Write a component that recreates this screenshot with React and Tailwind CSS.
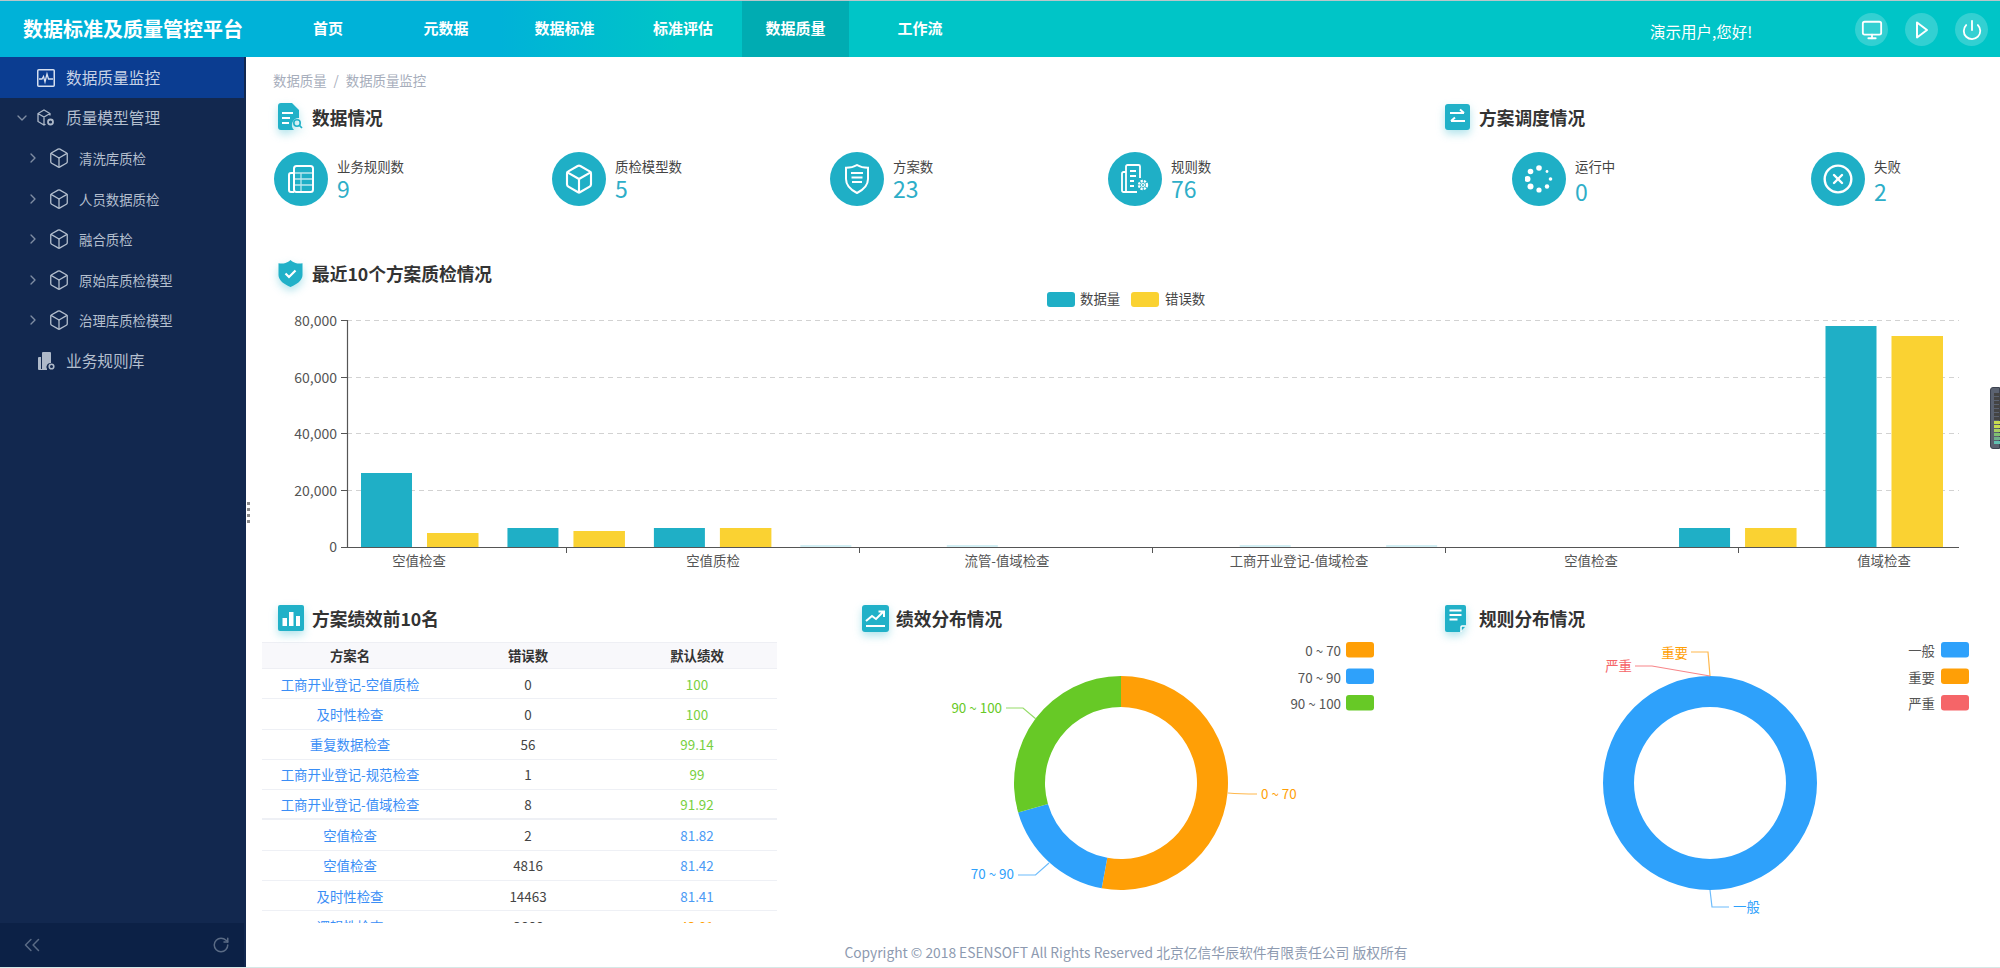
import { Box, ChevronDown, ChevronRight, ChevronsLeft, CircleX, Monitor, Power, RotateCw } from "lucide-react";

const NAV = [
  { label: "首页", w: "w-[118px]" },
  { label: "元数据", w: "w-[118px]" },
  { label: "数据标准", w: "w-[119px]" },
  { label: "标准评估", w: "w-[118px]" },
  { label: "数据质量", w: "w-[107px]", active: true },
  { label: "工作流", w: "w-[142px]" },
];

const SUB_MENU = ["清洗库质检", "人员数据质检", "融合质检", "原始库质检模型", "治理库质检模型"];

const GREEN = "text-[#79d03f]";
const BLUE = "text-[#4a9af5]";
const ORANGE = "text-[#ff9f06]";

const ROWS = [
  ["工商开业登记-空值质检", "0", "100", GREEN],
  ["及时性检查", "0", "100", GREEN],
  ["重复数据检查", "56", "99.14", GREEN],
  ["工商开业登记-规范检查", "1", "99", GREEN],
  ["工商开业登记-值域检查", "8", "91.92", GREEN],
  ["空值检查", "2", "81.82", BLUE],
  ["空值检查", "4816", "81.42", BLUE],
  ["及时性检查", "14463", "81.41", BLUE],
  ["逻辑性检查", "3666", "43.81", ORANGE],
];

// teal / yellow bar tops per category, in page pixels
const BARS = [
  [473, 533],
  [528, 531],
  [528, 528],
  [545, 547],
  [545, 547],
  [547, 547],
  [545, 547],
  [545, 547],
  [547, 547],
  [528, 528],
  [326, 336],
];

const X_LABELS = [
  ["空值检查", 419],
  ["空值质检", 713],
  ["流管-值域检查", 1007],
  ["工商开业登记-值域检查", 1299],
  ["空值检查", 1591],
  ["值域检查", 1884],
];

const polar = (cx, cy, r, deg) => {
  const a = ((deg - 90) * Math.PI) / 180;
  return [cx + r * Math.cos(a), cy + r * Math.sin(a)];
};

const arc = (cx, cy, R, r, from, to) => {
  const large = to - from > 180 ? 1 : 0;
  const [x0, y0] = polar(cx, cy, R, from);
  const [x1, y1] = polar(cx, cy, R, to);
  const [x2, y2] = polar(cx, cy, r, to);
  const [x3, y3] = polar(cx, cy, r, from);
  return `M${x0} ${y0}A${R} ${R} 0 ${large} 1 ${x1} ${y1}L${x2} ${y2}A${r} ${r} 0 ${large} 0 ${x3} ${y3}Z`;
};

function SectionTitle({ icon, children, className = "" }) {
  return (
    <div className={`flex h-[30px] items-center ${className}`}>
      <div className="flex w-[34px] shrink-0 items-center">{icon}</div>
      <span className="text-[17.7px] font-bold text-[#333]">{children}</span>
    </div>
  );
}

function Stat({ icon, label, value, low, className = "" }) {
  return (
    <div className={`flex gap-[9px] ${className}`}>
      <div className="flex h-[54px] w-[54px] items-center justify-center rounded-full bg-[#1fafc6] text-white">{icon}</div>
      <div className="pt-[5px]">
        <div className="text-[13.4px] leading-[18px] text-[#444]">{label}</div>
        <div className={`text-[23px] leading-[26px] text-[#2eaec8] ${low ? "mt-[3px]" : ""}`}>{value}</div>
      </div>
    </div>
  );
}

const TitleIconShadow = "drop-shadow-[0_4px_4px_rgba(33,177,200,0.35)]";

function DocSearchIcon() {
  return (
    <svg width="25" height="28" viewBox="0 0 25 28" className={TitleIconShadow}>
      <path d="M3 0h11l7 7v8a7 7 0 0 0-5 12H3a3 3 0 0 1-3-3V3a3 3 0 0 1 3-3Z" fill="#21b1c8" />
      <path d="M4 10h11M4 15h8M4 20h7" stroke="#fff" strokeWidth="2" />
      <circle cx="19" cy="20" r="3.2" fill="none" stroke="#21b1c8" strokeWidth="1.6" />
      <path d="M21.4 22.4 24 25" stroke="#21b1c8" strokeWidth="1.6" />
    </svg>
  );
}

function SwapIcon() {
  return (
    <svg width="25" height="26" viewBox="0 0 25 26" className={TitleIconShadow}>
      <rect width="25" height="26" rx="3" fill="#21b1c8" />
      <path d="M5 9h14M15 5.500 19 9M20 17H6M10 13.500 6 17" fill="none" stroke="#fff" strokeWidth="2" />
    </svg>
  );
}

function ShieldCheckIcon() {
  return (
    <svg width="25" height="27" viewBox="0 0 25 27" className={TitleIconShadow}>
      <path d="M12.500 0c2 2 3.500 2.500 5 3 2.500.8 5 .5 7 .3V15c0 5.500-6 9.500-12 12C6.500 24.500.5 20.500.5 15V3.300c2 .2 4.500.5 7-.3 1.500-.5 3-1 5-3Z" fill="#21b1c8" />
      <path d="m7.500 13.500 3.500 3.500 6.500-6.500" fill="none" stroke="#fff" strokeWidth="2.200" />
    </svg>
  );
}

function BarsIcon() {
  return (
    <svg width="26" height="26" viewBox="0 0 26 26" className={TitleIconShadow}>
      <rect width="26" height="26" rx="2" fill="#21b1c8" />
      <path d="M4.500 13h4.500v8H4.500zM11 7h4.500v14H11zM18 11h4v10h-4z" fill="#fff" />
    </svg>
  );
}

function TrendIcon() {
  return (
    <svg width="27" height="27" viewBox="0 0 27 27" className={TitleIconShadow}>
      <rect width="27" height="27" rx="3" fill="#21b1c8" />
      <path d="m4 16 6-5 4 3 7-7M16.500 6.500H22V12" fill="none" stroke="#fff" strokeWidth="2" />
      <path d="M4 21h19" stroke="#fff" strokeWidth="2" />
    </svg>
  );
}

function NoteIcon() {
  return (
    <svg width="21" height="27" viewBox="0 0 21 27" className={TitleIconShadow}>
      <path d="M2 0h17a2 2 0 0 1 2 2v19l-6 6H2a2 2 0 0 1-2-2V2a2 2 0 0 1 2-2Z" fill="#21b1c8" />
      <path d="M4.500 5.500h12M4.500 10h12M4.500 14.500h8" stroke="#fff" strokeWidth="1.800" />
      <path d="M16 27v-5a1 1 0 0 1 1-1h4" fill="none" stroke="#fff" strokeWidth="1.500" />
    </svg>
  );
}

function BookStatIcon() {
  return (
    <svg width="26" height="28" viewBox="0 0 26 28" fill="none" stroke="#fff" strokeWidth="2">
      <path d="M6 8H3a2 2 0 0 0-2 2v15a2 2 0 0 0 2 2h3" />
      <rect x="6" y="1" width="19" height="26" rx="2.500" />
      <path d="M7 8h17M7 14h17M7 20h17M13 8v19" strokeWidth="1.300" opacity="0.7" />
    </svg>
  );
}

function ShieldStatIcon() {
  return (
    <svg width="24" height="30" viewBox="0 0 24 30" fill="none" stroke="#fff" strokeWidth="2">
      <path d="M12 1c3 1.800 7 2.700 11 2.700V15c0 6-5 11-11 14C6 26 1 21 1 15V3.700C5 3.700 9 2.800 12 1Z" />
      <path d="M6 9h12M6.500 13.500h11M7 18h10" />
    </svg>
  );
}

function RulesStatIcon() {
  return (
    <svg width="28" height="30" viewBox="0 0 28 30" fill="none" stroke="#fff" strokeWidth="1.800">
      <path d="M5 8H2.500A1.500 1.500 0 0 0 1 9.500v17A1.500 1.500 0 0 0 2.500 28H16" />
      <path d="M5 28V2.500A1.500 1.500 0 0 1 6.500 1h11A1.500 1.500 0 0 1 19 2.500V14" />
      <path d="M9 7h6M9 12h6M9 17h4M9 22h4" />
      <circle cx="22" cy="21" r="4" strokeWidth="2.400" strokeDasharray="2.200 1" />
      <circle cx="22" cy="21" r="1.500" strokeWidth="1.200" />
    </svg>
  );
}

function SpinnerStatIcon() {
  return (
    <svg width="28" height="28" viewBox="0 0 28 28" fill="#fff">
      <circle cx="14" cy="3" r="2.800" />
      <circle cx="5.500" cy="6.500" r="2.800" />
      <circle cx="2.500" cy="14" r="3" />
      <circle cx="5.500" cy="21.500" r="3" />
      <circle cx="14" cy="25" r="2.600" />
      <circle cx="22" cy="21.500" r="2.200" />
      <circle cx="25.500" cy="14" r="1.800" />
      <circle cx="22" cy="6.500" r="1.400" />
    </svg>
  );
}

function ActivityIcon() {
  return (
    <svg width="18" height="18" viewBox="0 0 18 18" fill="none" stroke="#d5dff0">
      <rect x="0.750" y="0.750" width="16.500" height="16.500" rx="1" strokeWidth="1.500" />
      <path d="M2 10h3l1.500-2.500L8 13l2-8 1.500 5H16" strokeWidth="1.300" />
    </svg>
  );
}

function ModelIcon() {
  return (
    <svg width="18" height="18" viewBox="0 0 18 18" fill="none" stroke="#aeb9c9" strokeWidth="1.300">
      <path d="M13 6.500V4.500L7 1 1 4.500v8L7 16l1.500-.8M1 4.500 7 8l6-3.500M7 8v8" />
      <circle cx="13.500" cy="13" r="2.500" strokeWidth="1.800" />
    </svg>
  );
}

function RuleLibIcon() {
  return (
    <svg width="18" height="18" viewBox="0 0 18 18" fill="#aeb9c9">
      <path d="M2 5h2v12h6v1H2a1 1 0 0 1-1-1V6a1 1 0 0 1 1-1Z" />
      <path d="M5 1a1 1 0 0 1 1-1h7a1 1 0 0 1 1 1v10a4 4 0 0 0-4 6H5Z" />
      <circle cx="14.500" cy="14.500" r="2.300" fill="none" stroke="#aeb9c9" strokeWidth="1.600" />
    </svg>
  );
}

function NarrowPlayIcon() {
  return (
    <svg width="14" height="18" viewBox="0 0 14 18" fill="none" stroke="#fff" strokeWidth="2" strokeLinejoin="round">
      <path d="M2 1.500 12 9 2 16.500Z" />
    </svg>
  );
}

function PageTop() {
  return (
    <header className="flex h-[57px] shrink-0 items-stretch border-t border-[#b9c6ca] bg-[linear-gradient(90deg,#00b2d8_25%,#00c5c7_34%)] text-white">
      <div className="flex w-[269px] items-center pl-[23px] text-[20px] font-bold">数据标准及质量管控平台</div>
      {NAV.map((item) => (
        <div
          key={item.label}
          className={`flex items-center justify-center pb-[2px] text-[15px] font-bold ${item.w} ${item.active ? "bg-[#00acb2]" : ""}`}
        >
          {item.label}
        </div>
      ))}
      <div className="flex-1 pl-[659px] pt-[20px] text-[15.500px] leading-[20px]">演示用户,您好!</div>
      <div className="flex items-start gap-[17px] pr-[12px] pt-[12px]">
        <div className="flex h-[33px] w-[33px] items-center justify-center rounded-full bg-white/20">
          <Monitor size={22} strokeWidth={2} />
        </div>
        <div className="flex h-[33px] w-[33px] items-center justify-center rounded-full bg-white/20">
          <NarrowPlayIcon />
        </div>
        <div className="flex h-[33px] w-[33px] items-center justify-center rounded-full bg-white/20">
          <Power size={22} strokeWidth={2} />
        </div>
      </div>
    </header>
  );
}

function Sidebar() {
  return (
    <aside className="flex w-[246px] shrink-0 flex-col border-r-2 border-[#12284f] bg-[#12284f] text-[#b4bfce]">
      <div className="flex h-[41px] items-center gap-[11px] bg-[#0b3d91] pl-[37px] text-[15.700px] text-[#c7d2e6]">
        <ActivityIcon />
        数据质量监控
      </div>
      <div className="flex h-[40px] items-center text-[15.700px]">
        <ChevronDown size={16} className="ml-[14px] mr-[7px] text-[#7f8da3]" />
        <ModelIcon />
        <span className="ml-[11px]">质量模型管理</span>
      </div>
      {SUB_MENU.map((name) => (
        <div key={name} className="flex h-[40.500px] items-center text-[13.400px]">
          <ChevronRight size={16} className="ml-[25px] mr-[7px] text-[#7f8da3]" />
          <Box size={22} strokeWidth={1.400} className="text-[#b4bfce]" />
          <span className="ml-[9px]">{name}</span>
        </div>
      ))}
      <div className="flex h-[41px] items-center gap-[11px] pl-[37px] text-[15.700px]">
        <RuleLibIcon />
        业务规则库
      </div>
      <div className="mt-auto flex h-[44px] items-center justify-between bg-[#0c2146] pl-[19px] pr-[14px] text-[#5a6b85]">
        <ChevronsLeft size={26} strokeWidth={1.400} />
        <RotateCw size={18} strokeWidth={2} />
      </div>
    </aside>
  );
}

function QualityChart() {
  return (
    <svg width="1754" height="300" viewBox="246 290 1754 300" className="mt-[2px] block">
      {[320, 377, 433, 490].map((y) => (
        <line key={y} x1="347" x2="1959" y1={y + 0.5} y2={y + 0.5} stroke="#d2d2d2" strokeDasharray="5 4" />
      ))}
      {BARS.map(([teal, yellow], i) => {
        const x = 361 + 146.45 * i;
        return (
          <g key={i}>
            <rect x={x} y={teal} width="51" height={547 - teal} fill="#1fafc6" fillOpacity={547 - teal < 3 ? 0.2 : 1} />
            <rect x={x + 66} y={yellow} width="51.500" height={547 - yellow} fill="#fad232" />
          </g>
        );
      })}
      <path d="M347.500 320V547.500M341 547.500H1959" fill="none" stroke="#555" strokeWidth="1.200" />
      {[320, 377, 433, 490].map((y) => (
        <line key={y} x1="341" x2="347" y1={y + 0.5} y2={y + 0.5} stroke="#555" />
      ))}
      {[566, 859, 1152, 1445, 1738].map((x) => (
        <line key={x} x1={x + 0.5} x2={x + 0.5} y1="547" y2="553" stroke="#555" />
      ))}
      {[
        ["80,000", 320],
        ["60,000", 377],
        ["40,000", 433],
        ["20,000", 490],
        ["0", 546],
      ].map(([label, y]) => (
        <text key={label} x="337" y={y} textAnchor="end" dominantBaseline="central" className="fill-[#555] text-[14px]">
          {label}
        </text>
      ))}
      {X_LABELS.map(([label, x]) => (
        <text key={x} x={x} y="560" textAnchor="middle" dominantBaseline="central" className="fill-[#555] text-[13.400px]">
          {label}
        </text>
      ))}
      <rect x="1047" y="292" width="28" height="15" rx="3" fill="#1fafc6" />
      <text x="1080" y="298" dominantBaseline="central" className="fill-[#444] text-[13.400px]">数据量</text>
      <rect x="1131" y="292" width="28" height="15" rx="3" fill="#fad232" />
      <text x="1165" y="298" dominantBaseline="central" className="fill-[#444] text-[13.400px]">错误数</text>
    </svg>
  );
}

function Legend({ items, labelX, boxX }) {
  return items.map(([label, color], i) => (
    <g key={label}>
      <text x={labelX} y={650 + i * 26.500} textAnchor="end" dominantBaseline="central" className="fill-[#555] text-[13.400px]">
        {label}
      </text>
      <rect x={boxX} y={642 + i * 26.500} width="28" height="15.500" rx="3" fill={color} />
    </g>
  ));
}

function ScoreDonut() {
  const cx = 1121;
  const cy = 783;
  return (
    <svg width="583" height="296" viewBox="862 634 583 296" className="mt-[1px] block">
      <path d={arc(cx, cy, 107, 76, 0, 190.400)} fill="#ff9f06" />
      <path d={arc(cx, cy, 107, 76, 190.400, 254)} fill="#2ea1fb" />
      <path d={arc(cx, cy, 107, 76, 254, 360)} fill="#67c926" />
      <path d="M1228 793Q1240 794 1257 794" fill="none" stroke="#ffb84d" strokeWidth="1.200" />
      <text x="1261" y="793" dominantBaseline="central" className="fill-[#ff9f06] text-[13.400px]">0 ~ 70</text>
      <path d="M1006 708H1023L1036 719" fill="none" stroke="#95dc68" strokeWidth="1.200" />
      <text x="1002" y="707" textAnchor="end" dominantBaseline="central" className="fill-[#67c926] text-[13.400px]">90 ~ 100</text>
      <path d="M1018 875H1035.500L1049 863" fill="none" stroke="#6dbcfc" strokeWidth="1.200" />
      <text x="1014" y="873" textAnchor="end" dominantBaseline="central" className="fill-[#2ea1fb] text-[13.400px]">70 ~ 90</text>
      <Legend items={[["0 ~ 70", "#ff9f06"], ["70 ~ 90", "#2ea1fb"], ["90 ~ 100", "#67c926"]]} labelX={1341} boxX={1346} />
    </svg>
  );
}

function RuleDonut() {
  const cx = 1710;
  const cy = 783;
  return (
    <svg width="555" height="296" viewBox="1445 634 555 296" className="mt-[1px] block">
      <path d={arc(cx, cy, 107, 76, 0, 180)} fill="#2ea1fb" />
      <path d={arc(cx, cy, 107, 76, 180, 360)} fill="#2ea1fb" />
      <path d="M1691 652H1708L1710 676" fill="none" stroke="#ffb84d" strokeWidth="1.200" />
      <text x="1688" y="652" textAnchor="end" dominantBaseline="central" className="fill-[#ff9f06] text-[13.400px]">重要</text>
      <path d="M1635 666H1652L1710 676" fill="none" stroke="#f78689" strokeWidth="1.200" />
      <text x="1632" y="665" textAnchor="end" dominantBaseline="central" className="fill-[#f56568] text-[13.400px]">严重</text>
      <path d="M1710 890L1712 907H1729" fill="none" stroke="#6dbcfc" strokeWidth="1.200" />
      <text x="1733" y="906" dominantBaseline="central" className="fill-[#2ea1fb] text-[13.400px]">一般</text>
      <Legend items={[["一般", "#2ea1fb"], ["重要", "#ff9f06"], ["严重", "#f56568"]]} labelX={1935} boxX={1941} />
    </svg>
  );
}

function ScoreTable() {
  return (
    <div className="mt-[9px] h-[281px] w-[515px] overflow-hidden text-[13.400px]">
      <div className="grid h-[27px] grid-cols-[177px_179px_159px] items-center border-y border-[#eeeff4] bg-[#f8f8fb] text-center font-bold text-[#333]">
        <div>方案名</div>
        <div>错误数</div>
        <div>默认绩效</div>
      </div>
      {ROWS.map(([name, errors, score, color], i) => (
        <div
          key={i}
          className={`grid h-[30.300px] grid-cols-[177px_179px_159px] items-center border-[#eef0f5] text-center ${i === 4 ? "border-b-2" : "border-b"}`}
        >
          <div className="text-[#3a8ef6]">{name}</div>
          <div className="text-[#444]">{errors}</div>
          <div className={color}>{score}</div>
        </div>
      ))}
    </div>
  );
}

export default function App() {
  return (
    <div className="relative flex h-[968px] w-[2000px] flex-col overflow-hidden border-b border-[#d5e8e6] bg-white font-['Noto_Sans_CJK_SC',sans-serif]">
      <PageTop />
      <div className="flex min-h-0 flex-1">
        <Sidebar />
        <main className="relative flex min-w-0 flex-1 flex-col">
          <div className="flex h-[45px] items-center gap-[7px] pl-[27px] pt-[1px] text-[13.400px] text-[#a6adbb]">
            <span>数据质量</span>
            <span>/</span>
            <span>数据质量监控</span>
          </div>

          <div className="flex">
            <div className="w-[1199px] pl-[32px]">
              <SectionTitle icon={<DocSearchIcon />}>数据情况</SectionTitle>
              <div className="mt-[20px] flex">
                <Stat className="-ml-[4px] w-[278px]" icon={<BookStatIcon />} label="业务规则数" value="9" />
                <Stat className="w-[278px]" icon={<Box size={32} strokeWidth={1.600} />} label="质检模型数" value="5" />
                <Stat className="w-[278px]" icon={<ShieldStatIcon />} label="方案数" value="23" />
                <Stat icon={<RulesStatIcon />} label="规则数" value="76" />
              </div>
            </div>
            <div>
              <SectionTitle icon={<SwapIcon />}>方案调度情况</SectionTitle>
              <div className="mt-[20px] flex pl-[67px]">
                <Stat low className="w-[299px]" icon={<SpinnerStatIcon />} label="运行中" value="0" />
                <Stat low icon={<CircleX size={32} strokeWidth={1.800} />} label="失败" value="2" />
              </div>
            </div>
          </div>

          <SectionTitle className="ml-[32px] mt-[52px]" icon={<ShieldCheckIcon />}>
            最近10个方案质检情况
          </SectionTitle>
          <QualityChart />

          <div className="mt-[13px] flex">
            <div className="w-[616px] pl-[15.500px]">
              <SectionTitle className="ml-[16.500px]" icon={<BarsIcon />}>
                方案绩效前10名
              </SectionTitle>
              <ScoreTable />
            </div>
            <div className="w-[583px]">
              <SectionTitle icon={<TrendIcon />}>绩效分布情况</SectionTitle>
              <ScoreDonut />
            </div>
            <div className="w-[555px]">
              <SectionTitle icon={<NoteIcon />}>规则分布情况</SectionTitle>
              <RuleDonut />
            </div>
          </div>

          <div className="mt-auto flex h-[30px] items-center justify-center pl-[6px] text-[13.800px] text-[#8d9ab0]">
            Copyright © 2018 ESENSOFT All Rights Reserved 北京亿信华辰软件有限责任公司 版权所有
          </div>
        </main>
      </div>

      {/* splitter grip */}
      <div className="absolute left-[247px] top-[502px] flex flex-col gap-[3px]">
        {[0, 1, 2, 3].map((i) => (
          <div key={i} className="h-[3px] w-[3px] bg-[#8a8a8a]" />
        ))}
      </div>

      {/* floating meter widget */}
      <div className="absolute right-0 top-[387px] flex h-[62px] w-[10px] flex-col justify-center gap-[1px] rounded-l-[3px] border border-[#3d4350] bg-[#5b6270] pl-[3px]">
        {["#444", "#444", "#444", "#444", "#444", "#444", "#444", "#c8dc50", "#c8dc50", "#a8d060", "#80c070", "#70b088", "#60c0b0"].map((c, i) => (
          <div key={i} className="h-[3px] w-[6px]" style={{ backgroundColor: c }} />
        ))}
      </div>
    </div>
  );
}
